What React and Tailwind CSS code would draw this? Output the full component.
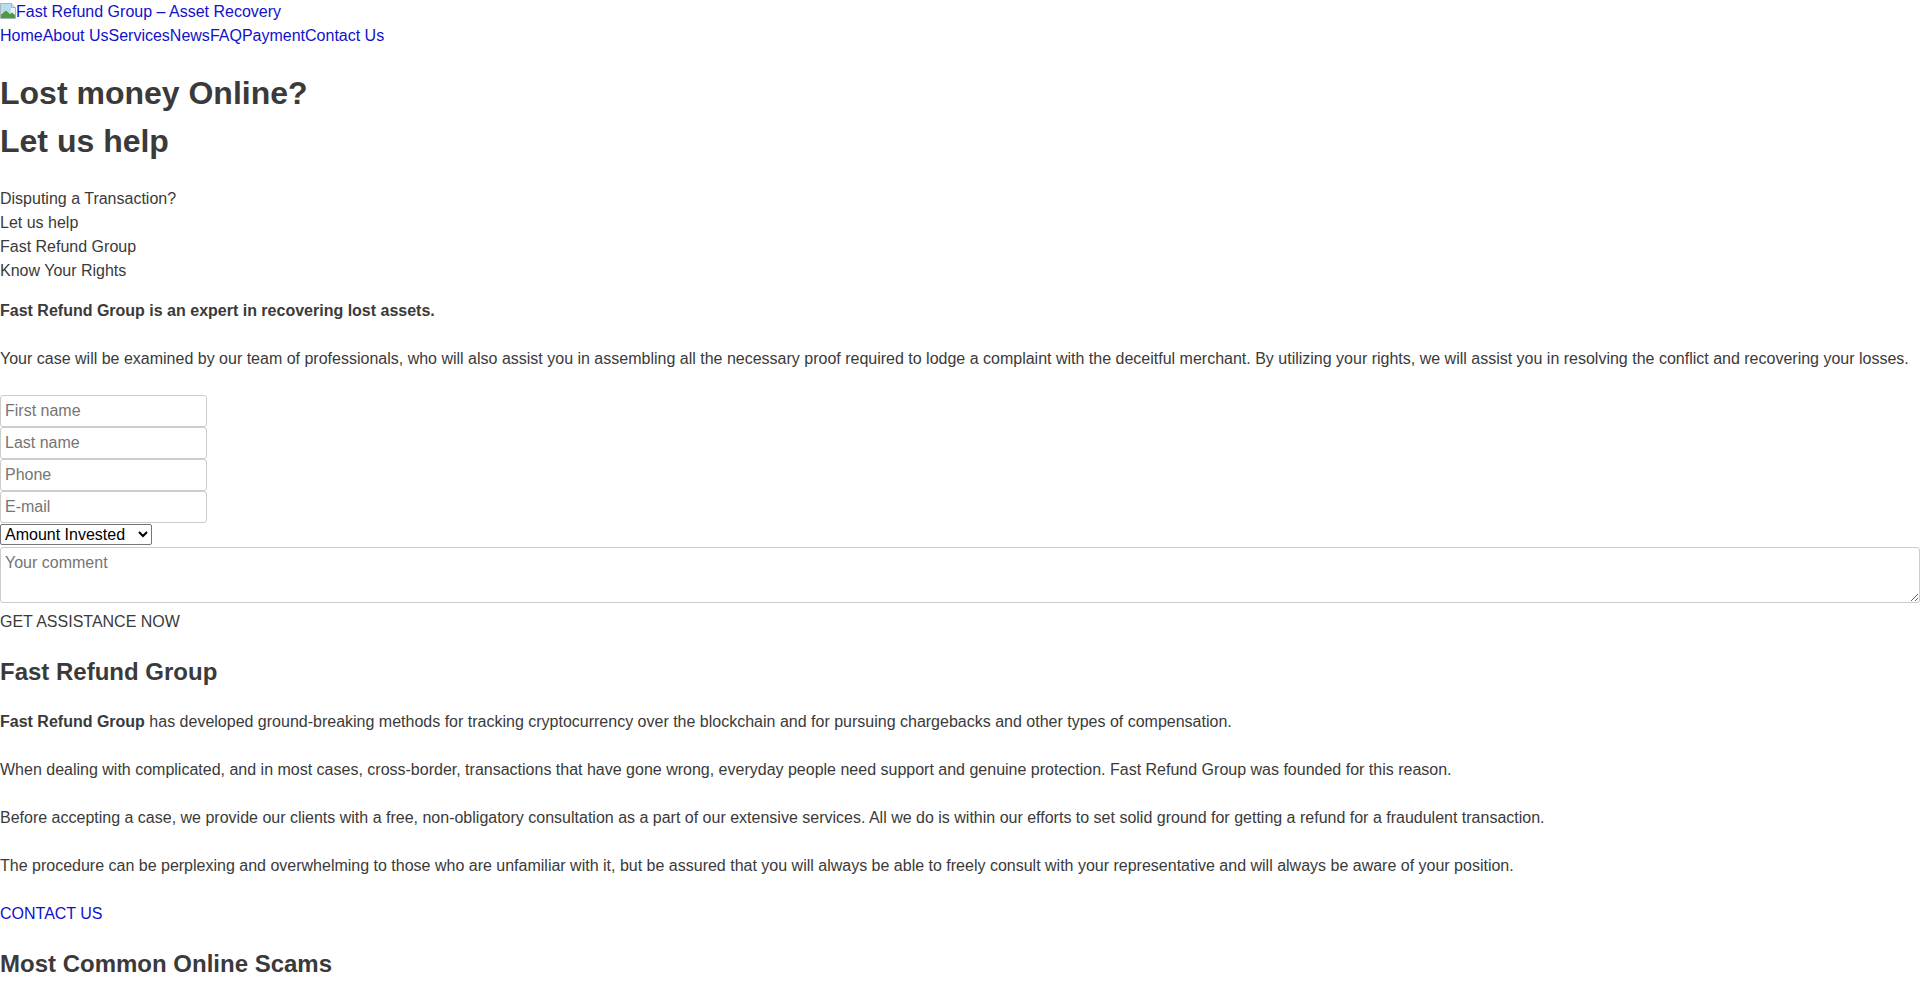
function BrokenImage() {
  return (
    <svg width="16" height="16" viewBox="0 0 16 16" className="inline-block align-[-2px]">
      <path d="M0.5 0.5h11l4 4v11H0.5z" fill="#eef3f7" stroke="#a9b3bc" />
      <path d="M11.5 0.5v4h4" fill="#dde3e8" stroke="#a9b3bc" />
      <rect x="1" y="1" width="10" height="9" fill="#b9dcef" />
      <path d="M1 15V11.5L6 7.5l4 3.5 2-1.5 3 2.5v3z" fill="#4f9a3c" />
    </svg>
  );
}

const navItems = ["Home", "About Us", "Services", "News", "FAQ", "Payment", "Contact Us"];

export default function App() {
  return (
    <div className="bg-white text-[#3a3a3a] text-base leading-6 font-['Liberation_Sans',Arial,sans-serif]">
      <div className="h-6">
        <a href="#" className="text-[#1111cc]">
          <BrokenImage />
          Fast Refund Group – Asset Recovery
        </a>
      </div>
      <nav className="flex h-6">
        {navItems.map((item) => (
          <a key={item} href="#" className="text-[#1111cc]">
            {item}
          </a>
        ))}
      </nav>

      <h1 className="mt-[21px] text-[32px] leading-[48px] font-bold">
        Lost money Online?
        <br />
        Let us help
      </h1>

      <div className="mt-[22px]">
        <div>Disputing a Transaction?</div>
        <div>Let us help</div>
        <div>Fast Refund Group</div>
        <div>Know Your Rights</div>
      </div>

      <p className="mt-4 font-bold">Fast Refund Group is an expert in recovering lost assets.</p>
      <p className="mt-6">
        Your case will be examined by our team of professionals, who will also assist you in assembling all the
        necessary proof required to lodge a complaint with the deceitful merchant. By utilizing your rights, we will
        assist you in resolving the conflict and recovering your losses.
      </p>

      <form className="mt-6 flex flex-col items-start">
        <input
          type="text"
          placeholder="First name"
          className="w-[207px] h-8 px-1 border border-[#cccccc] rounded-[3px] placeholder:text-[#757575]"
        />
        <input
          type="text"
          placeholder="Last name"
          className="w-[207px] h-8 px-1 border border-[#cccccc] rounded-[3px] placeholder:text-[#757575]"
        />
        <input
          type="text"
          placeholder="Phone"
          className="w-[207px] h-8 px-1 border border-[#cccccc] rounded-[3px] placeholder:text-[#757575]"
        />
        <input
          type="text"
          placeholder="E-mail"
          className="w-[207px] h-8 px-1 border border-[#cccccc] rounded-[3px] placeholder:text-[#757575]"
        />
        <select className="mt-px w-[152px] h-[21px] border border-[#767676] rounded-[2px] text-black leading-none">
          <option>Amount Invested</option>
          <option>Less than $5,000</option>
          <option>$5,000 - $20,000</option>
          <option>More than $20,000</option>
        </select>
        <textarea
          placeholder="Your comment"
          className="mt-0.5 w-full h-14 px-1 py-[3px] border border-[#cccccc] rounded-[3px] placeholder:text-[#757575]"
        />
        <div className="mt-[7px]">GET ASSISTANCE NOW</div>
      </form>

      <h2 className="mt-5 text-2xl leading-9 font-bold">Fast Refund Group</h2>
      <div className="mt-5 flex flex-col gap-6">
        <p>
          <strong>Fast Refund Group</strong> has developed ground-breaking methods for tracking cryptocurrency over the
          blockchain and for pursuing chargebacks and other types of compensation.
        </p>
        <p>
          When dealing with complicated, and in most cases, cross-border, transactions that have gone wrong, everyday
          people need support and genuine protection. Fast Refund Group was founded for this reason.
        </p>
        <p>
          Before accepting a case, we provide our clients with a free, non-obligatory consultation as a part of our
          extensive services. All we do is within our efforts to set solid ground for getting a refund for a fraudulent
          transaction.
        </p>
        <p>
          The procedure can be perplexing and overwhelming to those who are unfamiliar with it, but be assured that you
          will always be able to freely consult with your representative and will always be aware of your position.
        </p>
        <a href="#" className="text-[#1111cc]">
          CONTACT US
        </a>
      </div>

      <h2 className="mt-5 pb-6 text-2xl leading-9 font-bold">Most Common Online Scams</h2>
    </div>
  );
}
